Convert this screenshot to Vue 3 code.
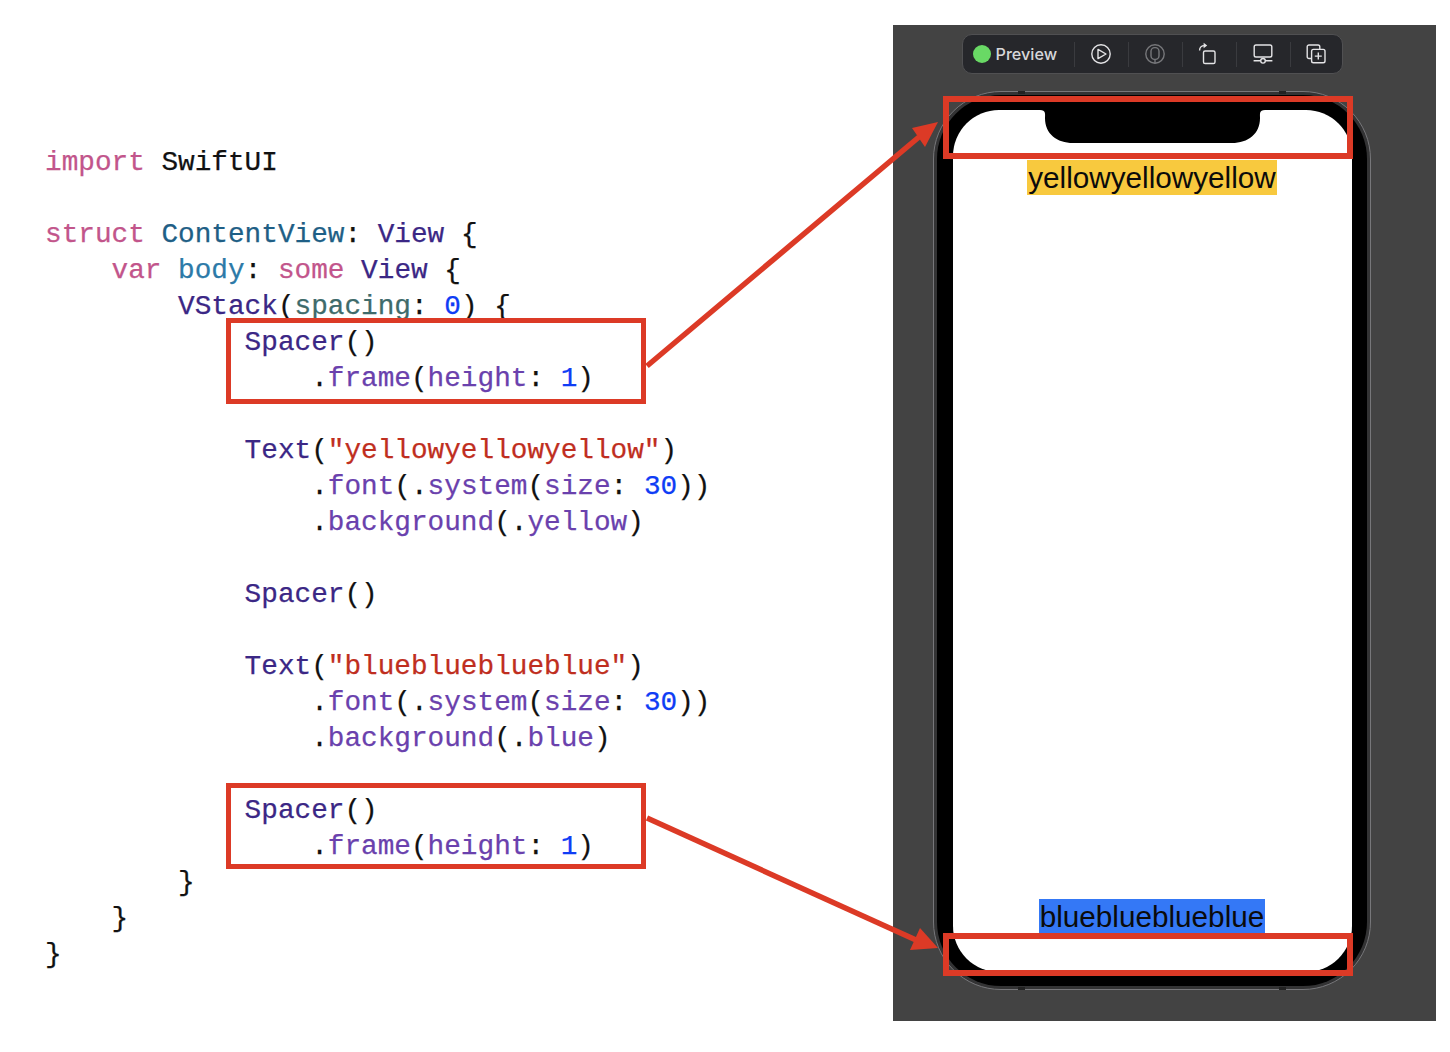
<script setup>
const kw = 'kw', ty = 'ty', de = 'de', nu = 'nu', st = 'st', me = 'me', pl = 'pl', ar = 'ar'

const spacer = (pad) => [[pl, pad], [ty, 'Spacer'], [pl, '()']]
const frame = [[pl, '                .'], [me, 'frame'], [pl, '('], [me, 'height'], [pl, ': '], [nu, '1'], [pl, ')']]
const font = [[pl, '                .'], [me, 'font'], [pl, '(.'], [me, 'system'], [pl, '('], [me, 'size'], [pl, ': '], [nu, '30'], [pl, '))']]

const lines = [
  [[kw, 'import'], [pl, ' SwiftUI']],
  [],
  [[kw, 'struct'], [pl, ' '], [de, 'ContentView'], [pl, ': '], [ty, 'View'], [pl, ' {']],
  [[pl, '    '], [kw, 'var'], [pl, ' '], [de, 'body'], [pl, ': '], [kw, 'some'], [pl, ' '], [ty, 'View'], [pl, ' {']],
  [[pl, '        '], [ty, 'VStack'], [pl, '('], [ar, 'spacing'], [pl, ': '], [nu, '0'], [pl, ') {']],
  spacer('            '),
  frame,
  [],
  [[pl, '            '], [ty, 'Text'], [pl, '('], [st, '"yellowyellowyellow"'], [pl, ')']],
  font,
  [[pl, '                .'], [me, 'background'], [pl, '(.'], [me, 'yellow'], [pl, ')']],
  [],
  spacer('            '),
  [],
  [[pl, '            '], [ty, 'Text'], [pl, '('], [st, '"blueblueblueblue"'], [pl, ')']],
  font,
  [[pl, '                .'], [me, 'background'], [pl, '(.'], [me, 'blue'], [pl, ')']],
  [],
  spacer('            '),
  frame,
  [[pl, '        }']],
  [[pl, '    }']],
  [[pl, '}']],
]
</script>

<template>
  <div class="page">
    <section class="code">
      <div v-for="(line, i) in lines" :key="i" class="line"><span v-for="(t, j) in line" :key="j" :class="t[0]">{{ t[1] }}</span></div>
    </section>

    <section class="panel">
      <div class="toolbar">
        <div class="live">
          <span class="dot"></span>
          <span class="label">Preview</span>
        </div>
        <div class="cell">
          <svg width="22" height="22" viewBox="0 0 22 22" fill="none" stroke="#e4e4e6" stroke-width="1.4">
            <circle cx="11" cy="11" r="9.2" />
            <path d="M8 6.4 L16 11 L8 15.6 Z" stroke-linejoin="round" />
          </svg>
        </div>
        <div class="cell">
          <svg width="22" height="22" viewBox="0 0 22 22" fill="none" stroke="#77787b" stroke-width="1.4">
            <circle cx="11" cy="11" r="9.2" />
            <rect x="7" y="4.6" width="8" height="11.8" rx="3.6" />
            <path d="M11 16.4 V20" />
          </svg>
        </div>
        <div class="cell">
          <svg width="22" height="24" viewBox="0 0 22 24" fill="none" stroke="#e4e4e6" stroke-width="1.4">
            <rect x="5.5" y="9" width="11.5" height="12.5" rx="1.6" />
            <path d="M1.6 8.5 C1.6 5.4 3.8 3.6 6.7 3.6" />
            <path d="M5.6 0.8 L9.2 3.6 L5.6 6.2 Z" fill="#e4e4e6" stroke="none" />
          </svg>
        </div>
        <div class="cell">
          <svg width="22" height="22" viewBox="0 0 22 22" fill="none" stroke="#e4e4e6" stroke-width="1.4">
            <rect x="2.2" y="2" width="17.6" height="12" rx="1.8" />
            <path d="M1.6 17.8 H8.6 M13.4 17.8 H20.4" />
            <circle cx="11" cy="17.8" r="2.3" />
          </svg>
        </div>
        <div class="cell">
          <svg width="22" height="22" viewBox="0 0 22 22" fill="none" stroke="#e4e4e6" stroke-width="1.4">
            <path d="M6.5 15.5 H4 A1.8 1.8 0 0 1 2.2 13.7 V3.8 A1.8 1.8 0 0 1 4 2 H13 A1.8 1.8 0 0 1 14.8 3.8 V6.2" />
            <rect x="6.6" y="6.4" width="13.4" height="13.4" rx="1.8" />
            <path d="M13.3 9.6 V16.6 M9.8 13.1 H16.8" />
          </svg>
        </div>
      </div>

      <div class="phone">
        <i class="tick t1"></i><i class="tick t2"></i><i class="tick t3"></i><i class="tick t4"></i>
        <div class="bezel">
          <div class="screen">
            <svg class="notch" width="225" height="34" viewBox="0 0 225 34">
              <path d="M0 0 H225 C219 0 220 4 220 8 C220 24 208 33 192 33 H33 C17 33 5 24 5 8 C5 4 6 0 0 0 Z" fill="#000" />
            </svg>
            <span class="sample yellow">yellowyellowyellow</span>
            <span class="sample blue">blueblueblueblue</span>
          </div>
        </div>
      </div>
    </section>

    <i class="mark m1"></i>
    <i class="mark m2"></i>
    <i class="mark m3"></i>
    <i class="mark m4"></i>

    <svg class="arrows" width="1450" height="1052" viewBox="0 0 1450 1052">
      <path d="M647 366 L919 137" stroke="#dc3a26" stroke-width="5.5" fill="none" />
      <path d="M938 122 L912 128 L925 147 Z" fill="#dc3a26" />
      <path d="M647 818 L916 940" stroke="#dc3a26" stroke-width="5.5" fill="none" />
      <path d="M938 948 L920 928 L910 950 Z" fill="#dc3a26" />
    </svg>
  </div>
</template>

<style>
html, body { margin: 0; background: #fff; }
</style>

<style scoped>
.page {
  position: relative;
  display: flex;
  width: 1450px;
  height: 1052px;
  overflow: hidden;
  background: #fff;
}
.code {
  width: 848px;
  padding: 145px 0 0 45px;
  font-family: "Liberation Mono", monospace;
  font-size: 27.73px;
  line-height: 36px;
  -webkit-text-stroke: 0.25px currentColor;
}
.line { height: 36px; white-space: pre; color: #111; }
.kw { color: #c2558b; }
.ty { color: #3b2785; }
.de { color: #1f5f86; }
.nu { color: #0f3df5; }
.st { color: #bf2e20; }
.me { color: #6a41ad; }
.ar { color: #3e6b6b; }
.pl { color: #111; }
.code .line:nth-child(4) .de { color: #2c7aa8; }

.panel {
  box-sizing: border-box;
  width: 543px;
  height: 996px;
  margin-top: 25px;
  padding: 9px 25px 0 0;
  display: flex;
  flex-direction: column;
  align-items: center;
  background: #434343;
}
.toolbar {
  box-sizing: border-box;
  display: flex;
  align-items: center;
  width: 381px;
  height: 40px;
  border: 1.5px solid #505052;
  border-radius: 10px;
  background: #26272b;
}
.live {
  box-sizing: border-box;
  display: flex;
  align-items: center;
  gap: 5px;
  width: 111px;
  height: 25px;
  padding-left: 10px;
}
.dot {
  width: 18px;
  height: 18px;
  border-radius: 50%;
  background: #69d965;
}
.label {
  font-family: Inter, sans-serif;
  font-size: 16.2px;
  font-weight: 500;
  line-height: 24px;
  color: #d6d7d9;
}
.cell {
  box-sizing: border-box;
  display: flex;
  align-items: center;
  justify-content: center;
  width: 54px;
  height: 25px;
  border-left: 1px solid #3a3b3f;
}
.cell:last-child { width: 52px; }

.phone {
  position: relative;
  box-sizing: border-box;
  width: 438px;
  height: 899px;
  margin-top: 17px;
  padding: 3px;
  border: 1.5px solid #77777a;
  border-radius: 68px;
  background: #333334;
}
.tick {
  position: absolute;
  width: 7px;
  height: 3px;
  background: #222;
}
.t1 { top: -1px; left: 84px; }
.t2 { top: -1px; right: 84px; }
.t3 { bottom: -1px; left: 84px; }
.t4 { bottom: -1px; right: 84px; }
.bezel {
  box-sizing: border-box;
  display: flex;
  height: 100%;
  padding: 14.5px 15.5px;
  border-radius: 64px;
  background: #000;
}
.screen {
  position: relative;
  display: flex;
  flex: 1;
  flex-direction: column;
  align-items: center;
  justify-content: space-between;
  box-sizing: border-box;
  padding: 50px 0 38px;
  border-radius: 46px;
  background: #fff;
  overflow: hidden;
}
.notch {
  position: absolute;
  top: 0;
  left: 87px;
}
.sample {
  font-family: "Liberation Sans", sans-serif;
  font-size: 29.7px;
  line-height: 35px;
  color: #0b0b0b;
}
.yellow { padding: 0 1px; background: #f8c93e; }
.blue { padding: 0 0.5px; background: #3478f6; }

.mark {
  position: absolute;
  box-sizing: border-box;
  border: 5px solid #dc3a26;
  pointer-events: none;
}
.m1 { left: 226px; top: 318px; width: 420px; height: 86px; }
.m2 { left: 226px; top: 783px; width: 420px; height: 86px; }
.m3 { left: 943px; top: 96px; width: 410px; height: 63px; border-width: 6px; }
.m4 { left: 943px; top: 933px; width: 410px; height: 43px; border-width: 6px; }
.arrows {
  position: absolute;
  top: 0;
  left: 0;
  pointer-events: none;
}
</style>
